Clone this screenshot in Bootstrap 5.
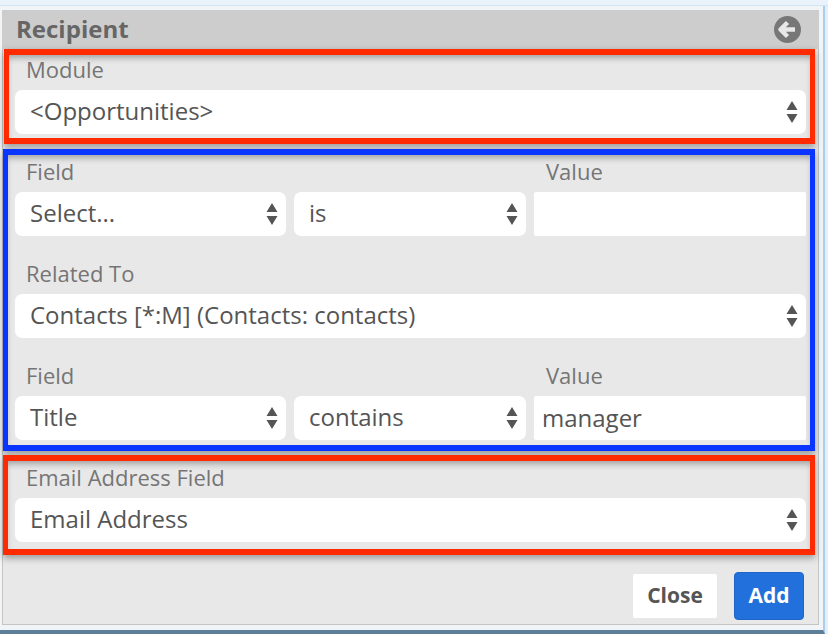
<!DOCTYPE html>
<html lang="en">
<head>
    <meta charset="UTF-8">
    <meta name="viewport" content="width=device-width, initial-scale=1.0">
    <title>Recipient</title>
    <link href="https://cdn.jsdelivr.net/npm/bootstrap@5.3.3/dist/css/bootstrap.min.css" rel="stylesheet">
    <style>
        html, body { height: 100%; }
        body {
            margin: 0;
            overflow: hidden;
            background: #e4eff9;
            font-family: "Open Sans", "Liberation Sans", sans-serif;
            color: #555;
        }
        .top-strip { height: 6px; background: #eaf3fc; border-bottom: 1px solid #d3e4f3; }
        .shell {
            width: 825px;
            height: 628px;
            padding: 4px 4px 5px 2px;
            background: #f2f5f8;
            border-right: 2px solid #a9cdea;
            border-bottom: 4px solid #5d7f99;
        }
        .dialog {
            height: 100%;
            display: flex;
            flex-direction: column;
            background: #e8e8e8;
            border: 1px solid #c4c4c4;
            border-top: 0;
        }
        .dlg-head {
            height: 39px;
            flex: none;
            margin: 0 -1px 0 -1px;
            padding: 0 18px 2px 14px;
            background: #cdcdcd;
            font-size: 24px;
            font-weight: 700;
            color: #666;
        }
        .dlg-head svg { margin-top: 2px; }
        .mark-box {
            margin-right: 3px;
            padding: 0 4px 0 7px;
            border-width: 6px 5px;
            border-style: solid;
            box-shadow: 0 3px 7px rgba(0, 0, 0, .35), inset 0 5px 6px -2px rgba(0, 0, 0, .3);
        }
        .mark-red { border-color: #ff2a00; }
        .mark-blue { border-color: #0a34ff; margin-top: 5px; margin-bottom: 4px; }
        .box-one { margin-left: 1px; padding-left: 6px; padding-bottom: 4px; }
        .box-two { padding-bottom: 5px; }
        .box-three { padding-bottom: 7px; }
        .fld-label {
            display: block;
            margin: 0;
            padding-left: 11px;
            font-size: 22px;
            line-height: 27px;
            color: #757575;
        }
        .lbl-top { padding-top: 1px; height: 35px; }
        .lbl-mid { padding-top: 3px; height: 37px; }
        .lbl-gap { margin-top: 20px; height: 38px; padding-top: 4px; }
        .fld-select, .fld-input {
            height: 44px;
            border: 0;
            font-size: 24px;
            line-height: 30px;
            color: #555;
            background-color: #fff;
        }
        .fld-select {
            padding: 0 30px 2px 15px;
            border-radius: 7px;
            background-image: url("data:image/svg+xml,%3Csvg xmlns='http://www.w3.org/2000/svg' width='12' height='22' viewBox='0 0 12 22'%3E%3Cpath fill='%23555' d='M6 0l5.5 9H.5zM.5 13h11L6 22z'/%3E%3C/svg%3E");
            background-repeat: no-repeat;
            background-position: right 8px center;
            background-size: 12px 22px;
        }
        .fld-input { padding: 0 8px 2px; border-radius: 2px; }
        .field-row { display: grid; grid-template-columns: 271px 232px 272px; column-gap: 8px; }
        .value-label { padding-left: 12px; }
        .dlg-foot {
            flex: 1;
            gap: 17px;
            padding: 13px 14px 0 0;
        }
        .btn-close-dlg, .btn-add-dlg { font-size: 21px; font-weight: 700; padding: 0; }
        .btn-close-dlg { width: 84px; height: 44px; background: #fff; color: #555; border: 0; border-radius: 2px; }
        .btn-add-dlg { width: 70px; height: 48px; background: #2270dc; color: #fff; border: 1px solid #1f66c8; border-radius: 4px; }
        .btn-close-dlg:hover { background: #fff; color: #555; }
        .btn-add-dlg:hover { background: #2270dc; color: #fff; border-color: #1f66c8; }
    </style>
</head>

<body>
    <div class="top-strip"></div>
    <div class="shell">
        <div class="dialog">
            <div class="dlg-head d-flex align-items-center justify-content-between">
                <span>Recipient</span>
                <svg width="27" height="27" viewBox="0 0 27 27" aria-hidden="true">
                    <circle cx="13.5" cy="13.5" r="13.5" fill="#777"/>
                    <path fill="none" stroke="#e8e8e8" stroke-width="4.5" stroke-linejoin="round" d="M13.5 6.5l-7 7 7 7M7 13.5h14"/>
                </svg>
            </div>

            <div class="mark-box mark-red box-one">
                <label class="fld-label lbl-top">Module</label>
                <select class="form-select fld-select"><option>&lt;Opportunities&gt;</option></select>
            </div>

            <div class="mark-box mark-blue box-two">
                <div class="field-row">
                    <label class="fld-label lbl-mid">Field</label>
                    <span></span>
                    <label class="fld-label lbl-mid value-label">Value</label>
                    <select class="form-select fld-select"><option>Select...</option></select>
                    <select class="form-select fld-select"><option>is</option></select>
                    <input class="form-control fld-input" type="text">
                </div>
                <label class="fld-label lbl-gap">Related To</label>
                <select class="form-select fld-select"><option>Contacts [*:M] (Contacts: contacts)</option></select>
                <div class="field-row">
                    <label class="fld-label lbl-gap">Field</label>
                    <span></span>
                    <label class="fld-label lbl-gap value-label">Value</label>
                    <select class="form-select fld-select"><option>Title</option></select>
                    <select class="form-select fld-select"><option>contains</option></select>
                    <input class="form-control fld-input" type="text" value="manager">
                </div>
            </div>

            <div class="mark-box mark-red box-three">
                <label class="fld-label lbl-mid">Email Address Field</label>
                <select class="form-select fld-select"><option>Email Address</option></select>
            </div>

            <div class="dlg-foot d-flex align-items-center justify-content-end">
                <button type="button" class="btn btn-close-dlg">Close</button>
                <button type="button" class="btn btn-add-dlg">Add</button>
            </div>
        </div>
    </div>

    <script src="https://cdn.jsdelivr.net/npm/bootstrap@5.3.3/dist/js/bootstrap.bundle.min.js"></script>
</body>
</html>
